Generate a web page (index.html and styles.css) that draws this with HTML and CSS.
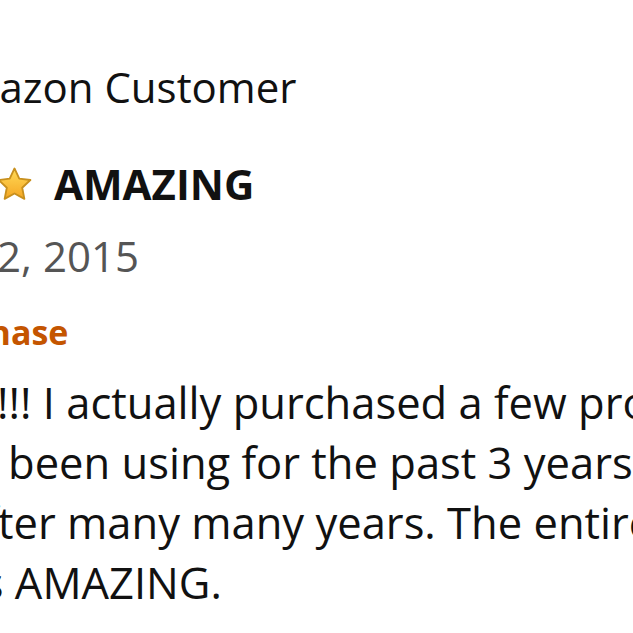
FILE: index.html
```html
<!DOCTYPE html>
<html lang="en">
<head>
<meta charset="utf-8">
<title>Review</title>
<link rel="stylesheet" href="styles.css">
</head>
<body>
<div class="viewport">
  <article class="review">
    <div class="profile">
      <div class="avatar"></div>
      <span class="name">Amazon Customer</span>
    </div>
    <div class="rating">
      <div class="stars">
        <svg class="star" viewBox="0 0 24 24"><defs><linearGradient id="g" x1="0" y1="0" x2="0" y2="1"><stop offset="0" stop-color="#ffdb58"/><stop offset="1" stop-color="#f5a623"/></linearGradient></defs><path d="M12 1.6l3.1 6.6 7.2.9-5.3 5 1.4 7.2L12 17.8l-6.4 3.5 1.4-7.2-5.3-5 7.2-.9z" fill="url(#g)" stroke="#c8901e" stroke-width="1.2" stroke-linejoin="round"/></svg>
        <svg class="star" viewBox="0 0 24 24"><path d="M12 1.6l3.1 6.6 7.2.9-5.3 5 1.4 7.2L12 17.8l-6.4 3.5 1.4-7.2-5.3-5 7.2-.9z" fill="url(#g)" stroke="#c8901e" stroke-width="1.2" stroke-linejoin="round"/></svg>
        <svg class="star" viewBox="0 0 24 24"><path d="M12 1.6l3.1 6.6 7.2.9-5.3 5 1.4 7.2L12 17.8l-6.4 3.5 1.4-7.2-5.3-5 7.2-.9z" fill="url(#g)" stroke="#c8901e" stroke-width="1.2" stroke-linejoin="round"/></svg>
        <svg class="star" viewBox="0 0 24 24"><path d="M12 1.6l3.1 6.6 7.2.9-5.3 5 1.4 7.2L12 17.8l-6.4 3.5 1.4-7.2-5.3-5 7.2-.9z" fill="url(#g)" stroke="#c8901e" stroke-width="1.2" stroke-linejoin="round"/></svg>
        <svg class="star" viewBox="0 0 24 24"><path d="M12 1.6l3.1 6.6 7.2.9-5.3 5 1.4 7.2L12 17.8l-6.4 3.5 1.4-7.2-5.3-5 7.2-.9z" fill="url(#g)" stroke="#c8901e" stroke-width="1.2" stroke-linejoin="round"/></svg>
      </div>
      <h2 class="title">AMAZING</h2>
    </div>
    <div class="date">September 2, 2015</div>
    <div class="verified">Verified Purchase</div>
    <p class="body">
      <span class="line">AMAZING!!!!!! I actually purchased a few products</span>
      <span class="line">ones I have been using for the past 3 years</span>
      <span class="line">products after many many years. The entire</span>
      <span class="line">collection is AMAZING.</span>
    </p>
  </article>
</div>
</body>
</html>
```

FILE: styles.css
```css
html, body {
  margin: 0;
  padding: 0;
  background: #ffffff;
}

.viewport {
  width: 633px;
  height: 633px;
  overflow: hidden;
}

.review {
  margin-left: -230px;
  width: 1200px;
  padding-top: 59px;
  font-family: "Open Sans", "Noto Sans", sans-serif;
  color: #111111;
}

.profile {
  display: flex;
  align-items: center;
  gap: 36px;
}

.avatar {
  width: 128px;
  height: 56px;
}

.name {
  font-size: 42px;
  line-height: 56px;
  color: #111111;
}

.rating {
  display: flex;
  align-items: center;
  gap: 21px;
  margin-top: 41px;
}

.stars {
  display: flex;
  gap: 19.5px;
}

.star {
  width: 37px;
  height: 37px;
  display: block;
}

.title {
  margin: 0;
  font-size: 42px;
  line-height: 56px;
  font-weight: 700;
  color: #111111;
}

.date {
  margin-top: 16px;
  font-size: 42px;
  line-height: 56px;
  color: #555555;
}

.verified {
  margin-top: 26px;
  font-size: 34px;
  line-height: 44px;
  font-weight: 700;
  color: #c45500;
}

.body {
  margin: 19px 0 0 -3px;
  font-size: 43.5px;
  line-height: 60px;
  color: #111111;
}

.line {
  display: block;
  white-space: nowrap;
}
```
